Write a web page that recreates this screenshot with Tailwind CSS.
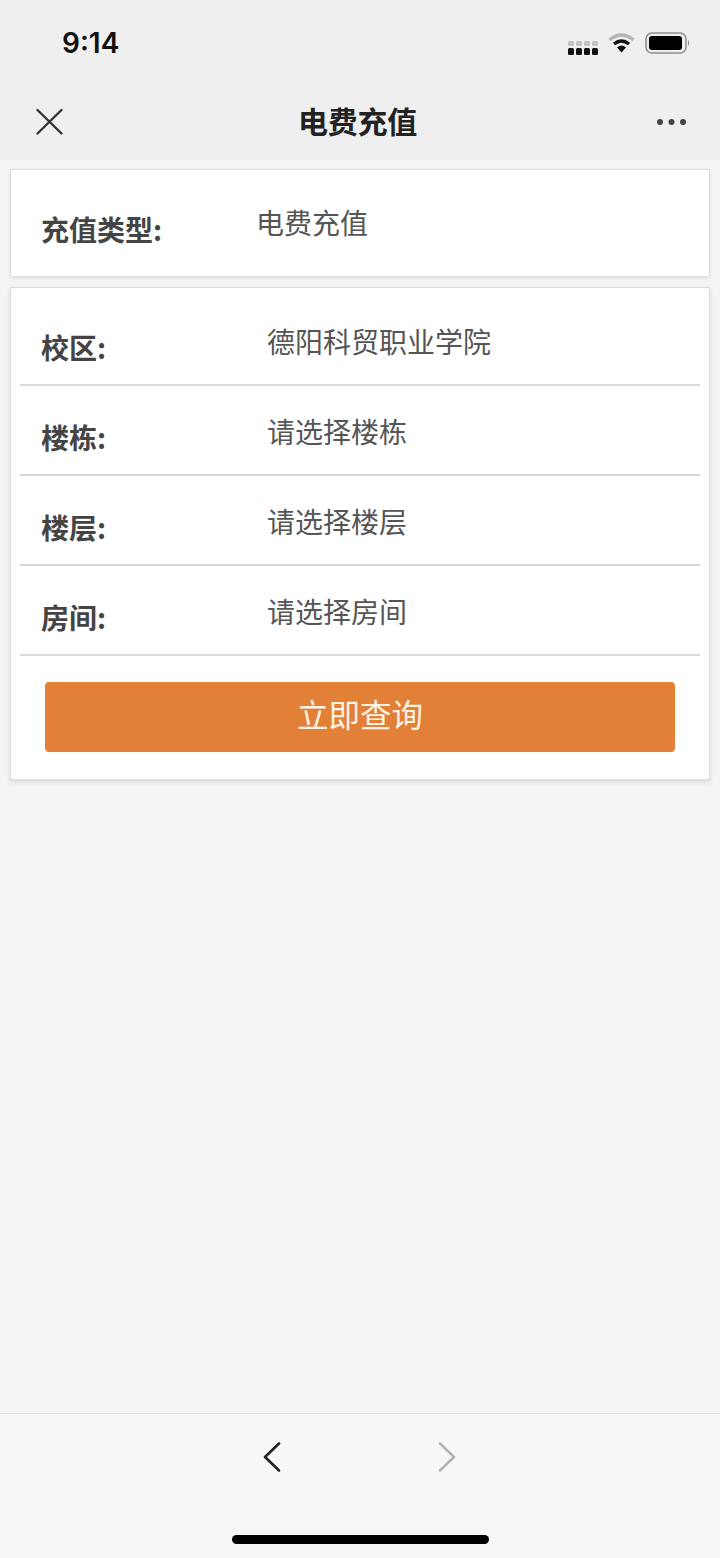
<!doctype html>
<html lang="zh">
<head>
<meta charset="utf-8">
<script src="https://cdn.jsdelivr.net/npm/@tailwindcss/browser@4"></script>
<title>电费充值</title>
</head>
<body class="m-0">
<div class="w-[720px] h-[1558px] flex flex-col bg-[#f5f5f5] overflow-hidden font-['Noto_Sans_CJK_SC','Noto_Sans',sans-serif]">
  <!-- status bar -->
  <div class="h-[87px] shrink-0 bg-[#efefef] flex items-start justify-between pl-[62px] pr-[29px] pt-[26px]">
    <span class="font-['Inter',sans-serif] text-[28px] leading-[34px] font-semibold text-[#111]">9:14</span>
    <div class="flex items-start gap-[10px] pt-[7px]">
      <svg width="30" height="16" viewBox="0 0 30 16" class="mt-[7px]"><g fill="#c4c4c4"><rect x="0" y="1" width="6" height="5" rx="1.5"/><rect x="8" y="1" width="6" height="5" rx="1.5"/><rect x="16" y="1" width="6" height="5" rx="1.5"/><rect x="24" y="1" width="6" height="5" rx="1.5"/></g><g fill="#111"><rect x="0" y="8" width="6" height="7" rx="1.5"/><rect x="8" y="8" width="6" height="7" rx="1.5"/><rect x="16" y="8" width="6" height="7" rx="1.5"/><rect x="24" y="8" width="6" height="7" rx="1.5"/></g></svg>
      <svg width="27" height="22" viewBox="0 0 27 22" class="mt-[-1px]"><path d="M1.5 8 Q13.5 -2 25.5 8" fill="none" stroke="#b5b5b5" stroke-width="3.5"/><path d="M6 12 Q13.5 6 21 12" fill="none" stroke="#111" stroke-width="3.5"/><path d="M9 15.5 Q13.5 11.5 18 15.5 L13.5 20.5 Z" fill="#111"/></svg>
      <svg width="46" height="22" viewBox="0 0 46 22" class="mt-[-1px]"><rect x="1" y="1" width="40" height="20" rx="6" fill="none" stroke="#8f8f8f" stroke-width="1.6"/><rect x="4" y="4" width="33" height="14" rx="3" fill="#000"/><path d="M43 8 Q45.5 11 43 14 Z" fill="#8f8f8f"/></svg>
    </div>
  </div>
  <!-- nav -->
  <div class="h-[73px] shrink-0 bg-[#efefef] flex items-center justify-between pl-[36px] pr-[33px] pb-[4px]">
    <svg width="27" height="27" viewBox="0 0 27 27"><path d="M1.5 2 L25.5 25.500 M25.500 2 L1.500 25.500" stroke="#333" stroke-width="2.400" stroke-linecap="round" fill="none"/></svg>
    <span class="mb-[4px] mr-[4px] text-[30px] leading-[40px] font-semibold text-[#222] tracking-[-0.3px]">电费充值</span>
    <svg width="31" height="8" viewBox="0 0 31 8"><circle cx="4" cy="4" r="3" fill="#444"/><circle cx="15.500" cy="4" r="3" fill="#444"/><circle cx="27" cy="4" r="3" fill="#444"/></svg>
  </div>
  <main class="flex-1 px-[10px] pt-[9px] flex flex-col gap-[10px]">
    <!-- card 1 -->
    <section class="h-[108px] bg-white border border-[#dedede] shadow-[0_1px_3px_rgba(0,0,0,0.12)] flex items-start pl-[30px]">
      <span class="w-[215px] pt-[40px] text-[28px] leading-[38px] font-semibold text-[#444]">充值类型:</span>
      <span class="pt-[33px] text-[28px] leading-[38px] text-[#555]">电费充值</span>
    </section>
    <!-- card 2 -->
    <section class="h-[493px] bg-white border border-[#dedede] shadow-[0_2px_5px_rgba(0,0,0,0.12)] pt-[8px] px-[9px]">
      <div class="h-[90px] border-b-[2px] border-[#d8d8d8] flex items-start pl-[21px] pt-[32px]">
        <span class="w-[226px] text-[28px] leading-[38px] font-semibold text-[#444]">校区:</span>
        <span class="mt-[-6px] text-[28px] leading-[38px] text-[#555]">德阳科贸职业学院</span>
      </div>
      <div class="h-[90px] border-b-[2px] border-[#d8d8d8] flex items-start pl-[21px] pt-[32px]">
        <span class="w-[226px] text-[28px] leading-[38px] font-semibold text-[#444]">楼栋:</span>
        <span class="mt-[-6px] text-[28px] leading-[38px] text-[#555]">请选择楼栋</span>
      </div>
      <div class="h-[90px] border-b-[2px] border-[#d8d8d8] flex items-start pl-[21px] pt-[32px]">
        <span class="w-[226px] text-[28px] leading-[38px] font-semibold text-[#444]">楼层:</span>
        <span class="mt-[-6px] text-[28px] leading-[38px] text-[#555]">请选择楼层</span>
      </div>
      <div class="h-[90px] border-b-[2px] border-[#d8d8d8] flex items-start pl-[21px] pt-[32px]">
        <span class="w-[226px] text-[28px] leading-[38px] font-semibold text-[#444]">房间:</span>
        <span class="mt-[-6px] text-[28px] leading-[38px] text-[#555]">请选择房间</span>
      </div>
      <div class="px-[25px] pt-[26px]">
        <button class="w-full h-[70px] rounded-[4px] bg-[#e28038] text-[#fdf3e3] text-[31.500px] leading-[62px] pb-[8px]">立即查询</button>
      </div>
    </section>
  </main>
  <!-- bottom bar -->
  <div class="h-[145px] shrink-0 bg-[#f7f7f7] border-t border-[#e2e2e2] flex flex-col items-center">
    <div class="flex items-center gap-[157px] pt-[28px] pr-[1px]">
      <svg width="18" height="30" viewBox="0 0 18 30"><path d="M16 1.500 L2 15 L16 28.500" fill="none" stroke="#222" stroke-width="2.600" stroke-linecap="round" stroke-linejoin="round"/></svg>
      <svg width="18" height="30" viewBox="0 0 18 30"><path d="M2 1.500 L16 15 L2 28.500" fill="none" stroke="#b4b4b4" stroke-width="2.600" stroke-linecap="round" stroke-linejoin="round"/></svg>
    </div>
    <div class="mt-[63px] w-[257px] h-[9px] rounded-full bg-black"></div>
  </div>
</div>
</body>
</html>
